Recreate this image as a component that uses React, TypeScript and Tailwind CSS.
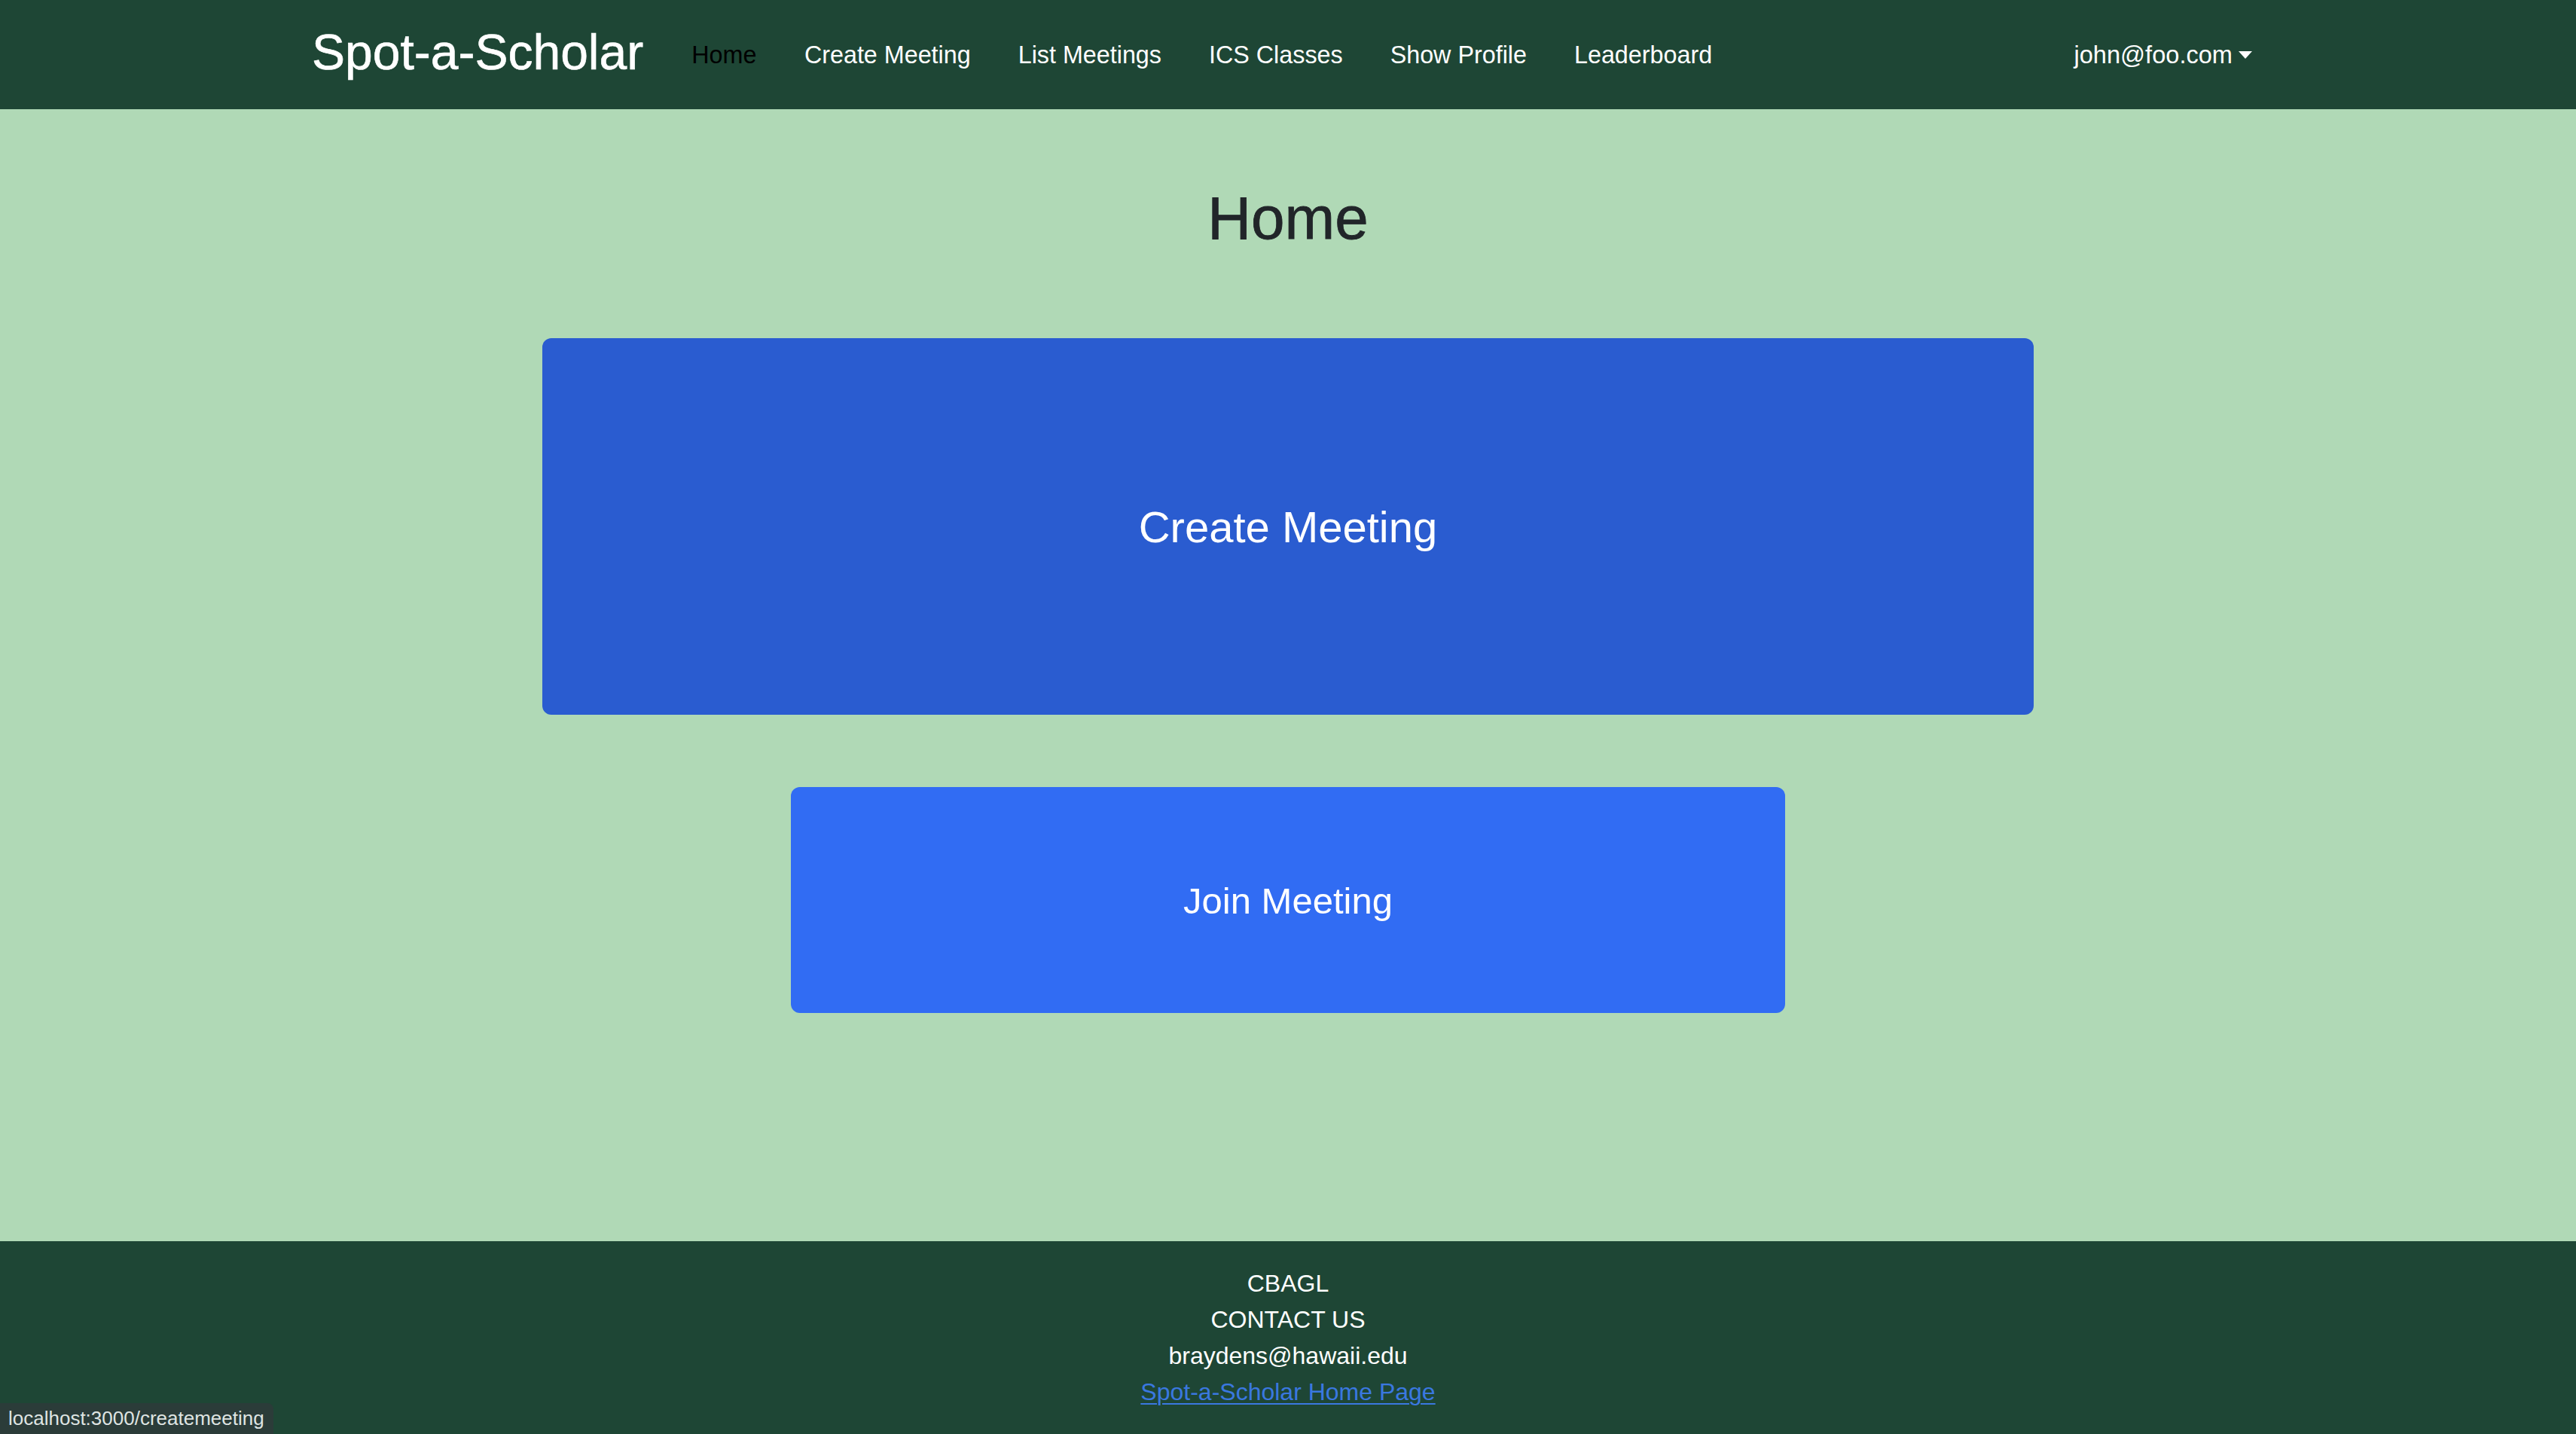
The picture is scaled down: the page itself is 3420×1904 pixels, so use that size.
const links = ['Create Meeting', 'List Meetings', 'ICS Classes', 'Show Profile', 'Leaderboard']

function NavBar() {
  return (
    <nav className="h-[145px] shrink-0 bg-[#1e4635]">
      <div className="mx-auto flex h-full w-[2640px] items-center px-6">
        <a className="mr-8 mb-[8px] text-[66px] leading-none text-white [-webkit-text-stroke:0.6px_white]">Spot-a-Scholar</a>
        <ul className="flex items-center">
          <li>
            <a className="block px-[32px] text-[32.3px] leading-[48px] text-black">Home</a>
          </li>
          {links.map((l) => (
            <li key={l}>
              <a className="block px-[31.5px] text-[32.3px] leading-[48px] text-white">{l}</a>
            </li>
          ))}
        </ul>
        <div className="ml-auto flex items-center pr-4 text-[32.6px] leading-[48px] text-white">
          john@foo.com
          <span className="ml-2 inline-block border-x-[9px] border-t-[10px] border-x-transparent border-t-white" />
        </div>
      </div>
    </nav>
  )
}

function Footer() {
  return (
    <footer className="shrink-0 bg-[#1e4635] py-8 text-center text-[32px] leading-[48px] text-white">
      <div>CBAGL</div>
      <div>CONTACT US</div>
      <div>braydens@hawaii.edu</div>
      <a className="text-[#3a78e0] underline decoration-2 underline-offset-4">Spot-a-Scholar Home Page</a>
    </footer>
  )
}

export default function App() {
  return (
    <div className="relative flex min-h-[1904px] flex-col bg-[#b0d9b6] font-['Liberation_Sans',Arial,sans-serif]">
      <NavBar />
      <main className="flex flex-1 flex-col items-center pt-[97px]">
        <h1 className="text-[80px] leading-[96px] text-[#212529] [-webkit-text-stroke:0.8px_#212529]">Home</h1>
        <button className="mt-[111px] flex h-[500px] w-[1980px] items-center justify-center rounded-xl bg-[#2a5cd0] text-[58px] text-white">
          Create Meeting
        </button>
        <button className="mt-[96px] flex h-[300px] w-[1320px] items-center justify-center rounded-xl bg-[#316cf3] pt-[3px] text-[49px] text-white">
          Join Meeting
        </button>
      </main>
      <Footer />
      {/* browser link-hover status bubble */}
      <div className="absolute bottom-0 left-0 flex h-[41px] w-[363px] items-center rounded-tr-lg bg-[#2b3c39] pl-[11px] text-[26px] text-[#dfe4e2]">
        localhost:3000/createmeeting
      </div>
    </div>
  )
}
